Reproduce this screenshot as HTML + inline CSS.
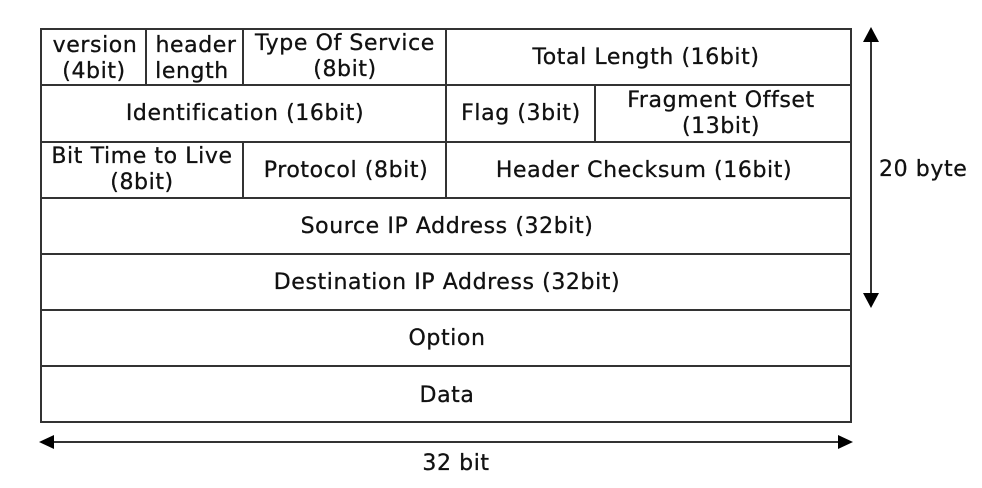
<!DOCTYPE html>
<html><head><style>html,body{margin:0;padding:0;background:#fff}</style></head><body>
<svg width="982" height="483" xmlns="http://www.w3.org/2000/svg" font-family="DejaVu Sans, Verdana, sans-serif" font-size="22" letter-spacing="0.6" fill="#111" stroke="#111" stroke-width="0.3">
<g stroke="#333" stroke-width="2" fill="none">
<rect x="41" y="29" width="810" height="393"/>
<line x1="41" y1="85" x2="851" y2="85"/>
<line x1="41" y1="142" x2="851" y2="142"/>
<line x1="41" y1="198" x2="851" y2="198"/>
<line x1="41" y1="254" x2="851" y2="254"/>
<line x1="41" y1="310" x2="851" y2="310"/>
<line x1="41" y1="366" x2="851" y2="366"/>
<line x1="146" y1="29" x2="146" y2="85"/>
<line x1="243" y1="29" x2="243" y2="85"/>
<line x1="446" y1="29" x2="446" y2="198"/>
<line x1="595" y1="85" x2="595" y2="142"/>
<line x1="243" y1="142" x2="243" y2="198"/>
<line x1="871" y1="40" x2="871" y2="296"/>
<line x1="52" y1="442" x2="840" y2="442"/>
</g>
<g fill="#000" stroke="none">
<polygon points="871,27 863,42 879,42"/>
<polygon points="871,308 863,293 879,293"/>
<polygon points="39,442 54,435 54,449"/>
<polygon points="853,442 838,435 838,449"/>
</g>
<g text-anchor="middle">
<text x="95" y="52">version</text><text x="94" y="78">(4bit)</text>
<text x="196" y="52">header</text><text x="192" y="78">length</text>
<text x="345" y="50">Type Of Service</text><text x="345" y="76">(8bit)</text>
<text x="646" y="64">Total Length (16bit)</text>
<text x="245" y="120">Identification (16bit)</text>
<text x="521" y="120">Flag (3bit)</text>
<text x="721" y="107">Fragment Offset</text><text x="721" y="133">(13bit)</text>
<text x="142" y="163">Bit Time to Live</text><text x="142" y="189">(8bit)</text>
<text x="346" y="177">Protocol (8bit)</text>
<text x="644" y="177">Header Checksum (16bit)</text>
<text x="447" y="233">Source IP Address (32bit)</text>
<text x="447" y="289">Destination IP Address (32bit)</text>
<text x="447" y="345">Option</text>
<text x="447" y="402">Data</text>
<text x="456" y="470">32 bit</text>
</g>
<text x="879" y="176">20 byte</text>
</svg>
</body></html>
